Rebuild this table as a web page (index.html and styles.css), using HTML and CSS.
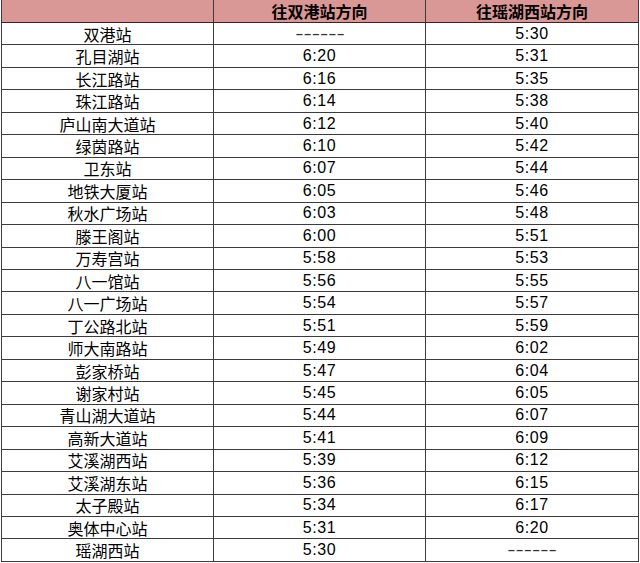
FILE: index.html
```html
<!DOCTYPE html>
<html lang="zh-CN">
<head>
<meta charset="utf-8">
<title>时刻表</title>
<link rel="stylesheet" href="styles.css">
</head>
<body>
<table class="timetable">
  <colgroup>
    <col class="c1"><col class="c2"><col class="c3">
  </colgroup>
  <thead>
    <tr><th></th><th>往双港站方向</th><th>往瑶湖西站方向</th></tr>
  </thead>
  <tbody>
    <tr><td class="st">双港站</td><td class="tm"><span class="dash">------</span></td><td class="tm">5:30</td></tr>
    <tr><td class="st">孔目湖站</td><td class="tm">6:20</td><td class="tm">5:31</td></tr>
    <tr><td class="st">长江路站</td><td class="tm">6:16</td><td class="tm">5:35</td></tr>
    <tr><td class="st">珠江路站</td><td class="tm">6:14</td><td class="tm">5:38</td></tr>
    <tr><td class="st">庐山南大道站</td><td class="tm">6:12</td><td class="tm">5:40</td></tr>
    <tr><td class="st">绿茵路站</td><td class="tm">6:10</td><td class="tm">5:42</td></tr>
    <tr><td class="st">卫东站</td><td class="tm">6:07</td><td class="tm">5:44</td></tr>
    <tr><td class="st">地铁大厦站</td><td class="tm">6:05</td><td class="tm">5:46</td></tr>
    <tr><td class="st">秋水广场站</td><td class="tm">6:03</td><td class="tm">5:48</td></tr>
    <tr><td class="st">滕王阁站</td><td class="tm">6:00</td><td class="tm">5:51</td></tr>
    <tr><td class="st">万寿宫站</td><td class="tm">5:58</td><td class="tm">5:53</td></tr>
    <tr><td class="st">八一馆站</td><td class="tm">5:56</td><td class="tm">5:55</td></tr>
    <tr><td class="st">八一广场站</td><td class="tm">5:54</td><td class="tm">5:57</td></tr>
    <tr><td class="st">丁公路北站</td><td class="tm">5:51</td><td class="tm">5:59</td></tr>
    <tr><td class="st">师大南路站</td><td class="tm">5:49</td><td class="tm">6:02</td></tr>
    <tr><td class="st">彭家桥站</td><td class="tm">5:47</td><td class="tm">6:04</td></tr>
    <tr><td class="st">谢家村站</td><td class="tm">5:45</td><td class="tm">6:05</td></tr>
    <tr><td class="st">青山湖大道站</td><td class="tm">5:44</td><td class="tm">6:07</td></tr>
    <tr><td class="st">高新大道站</td><td class="tm">5:41</td><td class="tm">6:09</td></tr>
    <tr><td class="st">艾溪湖西站</td><td class="tm">5:39</td><td class="tm">6:12</td></tr>
    <tr><td class="st">艾溪湖东站</td><td class="tm">5:36</td><td class="tm">6:15</td></tr>
    <tr><td class="st">太子殿站</td><td class="tm">5:34</td><td class="tm">6:17</td></tr>
    <tr><td class="st">奥体中心站</td><td class="tm">5:31</td><td class="tm">6:20</td></tr>
    <tr><td class="st">瑶湖西站</td><td class="tm">5:30</td><td class="tm"><span class="dash">------</span></td></tr>
  </tbody>
</table>
</body>
</html>
```
FILE: styles.css
```css
html, body {
  margin: 0;
  padding: 0;
  background: #ffffff;
}

.timetable {
  border-collapse: collapse;
  table-layout: fixed;
  width: 638px;
  margin: -1px 0 0 1px;
  color: #000;
  font-family: "Noto Sans CJK SC", "Liberation Sans", sans-serif;
  font-size: 16px;
}

.c1 { width: 212px; }
.c2 { width: 212px; }
.c3 { width: 213px; }

.timetable th,
.timetable td {
  border: 1px solid #3c3c3c;
  padding: 0;
  height: 21.46px;
  text-align: center;
  vertical-align: middle;
  line-height: 20px;
}

.timetable th {
  background: #d99795;
  font-weight: bold;
  height: 22px;
  border-bottom: 1.5px solid #2a2a2a;
}

.st {
  font-family: "Noto Sans CJK SC", sans-serif;
}

.tm {
  font-family: "Liberation Sans", "Noto Sans CJK SC", sans-serif;
  letter-spacing: 0.6px;
}

.dash {
  display: inline-block;
  letter-spacing: 0;
  transform: scaleX(1.55);
  color: #333;
}
```
